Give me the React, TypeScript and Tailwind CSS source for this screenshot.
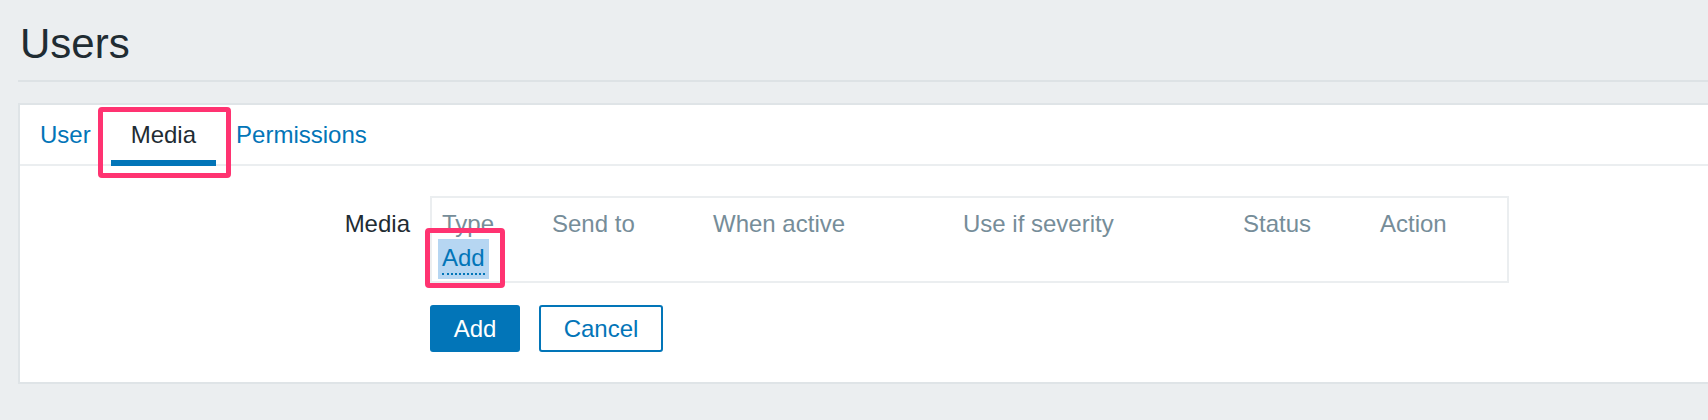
import React from "react";

export default function App() {
  const headers = [
    "Type",
    "Send to",
    "When active",
    "Use if severity",
    "Status",
    "Action",
  ];
  return (
    <div
      className="relative w-[1708px] h-[420px] overflow-hidden bg-[#ebeef0] text-[#1f2c33]"
      style={{ fontFamily: '"Liberation Sans", Arial, sans-serif' }}
    >
      {/* Header */}
      <div className="ml-[18px] pt-[20px] pb-[12px] border-b-2 border-[#dde2e5]">
        <h1 className="pl-[2px] text-[42px] leading-[48px] font-normal text-[#1f2c33]">
          Users
        </h1>
      </div>

      {/* Card */}
      <div className="ml-[18px] mt-[21px] w-[1720px] border-2 border-[#dfe4e7] bg-white">
        {/* Tabs */}
        <div className="flex border-b-2 border-[#ebeef0] h-[61px]">
          <div className="px-5 pt-[18px] h-[61px] mb-[-2px] border-b-[6px] border-transparent text-[24px] leading-[24px] text-[#0275b8]">
            User
          </div>
          <div className="px-5 pt-[18px] h-[61px] mb-[-2px] border-b-[6px] border-[#0275b8] text-[24px] leading-[24px] text-[#1f2c33]">
            Media
          </div>
          <div className="px-5 pt-[18px] h-[61px] mb-[-2px] border-b-[6px] border-transparent text-[24px] leading-[24px] text-[#0275b8]">
            Permissions
          </div>
        </div>

        {/* Form */}
        <div className="pt-[30px] pb-[30px]">
          <div className="flex items-start gap-[20px]">
            <div className="w-[390px] pt-[16px] text-right text-[24px] leading-[24px] text-[#1f2c33]">
              Media
            </div>
            <div className="w-[1079px] h-[87px] border-2 border-[#ebeef0] pl-[10px] pt-[14px]">
              <div className="grid grid-cols-[110px_161px_250px_280px_137px_1fr] text-[24px] leading-[24px] text-[#768d99]">
                {headers.map((h) => (
                  <div key={h}>{h}</div>
                ))}
              </div>
              <div className="mt-[3px] -ml-[4px]">
                <span className="inline-block bg-[#b6d6f2] px-[4px] pt-[7px] pb-[4px]">
                  <span className="block text-[24px] leading-[24px] text-[#0275b8] pb-[3px] border-b-2 border-dotted border-[#0275b8]">
                    Add
                  </span>
                </span>
              </div>
            </div>
          </div>
          <div className="ml-[390px] pl-[20px] mt-[22px] flex gap-[19px]">
            <button className="w-[90px] h-[47px] rounded-[3px] bg-[#0275b8] text-white text-[24px] leading-[24px] flex items-center justify-center">
              Add
            </button>
            <button className="w-[124px] h-[47px] rounded-[3px] border-2 border-[#0275b8] bg-white text-[#0275b8] text-[24px] leading-[24px] flex items-center justify-center">
              Cancel
            </button>
          </div>
        </div>
      </div>

      {/* Annotation highlight boxes */}
      <div className="absolute left-[98px] top-[107px] w-[133px] h-[71px] border-[5px] border-[#ff3371] rounded-[4px]" />
      <div className="absolute left-[425px] top-[228px] w-[80px] h-[60px] border-[5px] border-[#ff3371] rounded-[4px]" />
    </div>
  );
}
